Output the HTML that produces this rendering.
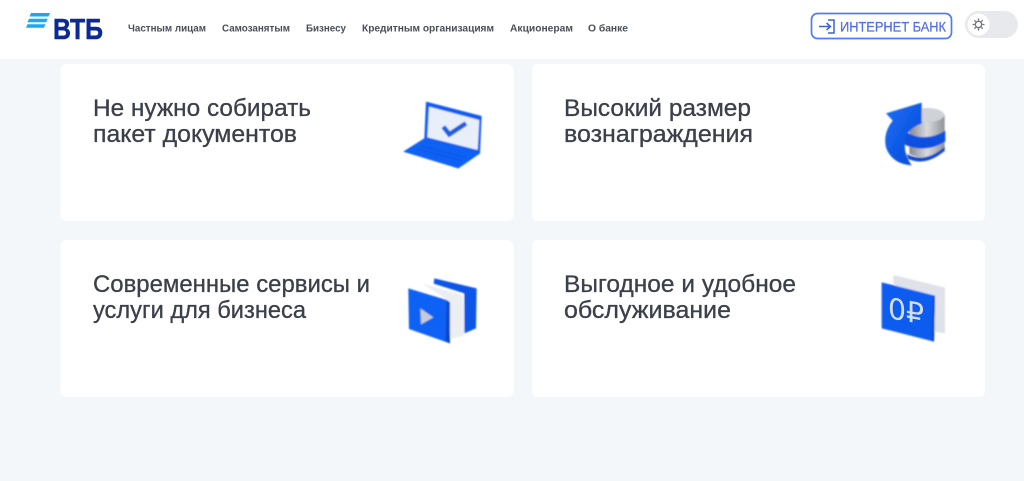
<!DOCTYPE html>
<html lang="ru">
<head>
<meta charset="utf-8">
<title>ВТБ</title>
<style>
html,body{margin:0;padding:0;width:1024px;height:481px;overflow:hidden;background:#f3f7fa}
svg{display:block;position:absolute;left:0;top:0}
text{font-family:"Liberation Sans","DejaVu Sans",sans-serif}
.n{font-size:10.5px;font-weight:700;fill:#4a4f58}
.h{font-size:24.5px;fill:#3a3f4a;stroke:#3a3f4a;stroke-width:.3px}
</style>
</head>
<body>
<svg width="1024" height="481" viewBox="0 0 1024 481" xmlns="http://www.w3.org/2000/svg">
<defs>
<linearGradient id="steel" x1="0" x2="1" y1="0" y2="0"><stop offset="0" stop-color="#84898f"/><stop offset=".5" stop-color="#d8dade"/><stop offset="1" stop-color="#8f949a"/></linearGradient>
<linearGradient id="blue" x1="0" x2="1" y1="0" y2="1"><stop offset="0" stop-color="#1670f5"/><stop offset="1" stop-color="#0b45d8"/></linearGradient>
<filter id="b" x="-10%" y="-10%" width="120%" height="120%"><feGaussianBlur stdDeviation="2"/></filter>
<filter id="t" x="-5%" y="-20%" width="110%" height="140%"><feGaussianBlur stdDeviation=".3"/></filter>
</defs>
<rect width="1024" height="481" fill="#f3f7fa"/>
<rect width="1024" height="59" fill="#fff"/>

<!-- logo -->
<g fill="#17a8f7">
<polygon points="31,13 50,13 48.5,16.5 29.5,16.5"/>
<polygon points="29,18.7 47.7,18.7 46.2,22.2 27.5,22.2"/>
<polygon points="27.5,24.2 45.5,24.2 44,27.7 26,27.7"/>
</g>
<text x="53" y="39" font-size="28.5" font-weight="700" fill="#0b2a94" stroke="#0b2a94" stroke-width=".5" textLength="50" lengthAdjust="spacingAndGlyphs">ВТБ</text>

<g filter="url(#t)">
<!-- nav -->
<text class="n" x="128" y="31.5" textLength="78" lengthAdjust="spacingAndGlyphs">Частным лицам</text>
<text class="n" x="222" y="31.5" textLength="68" lengthAdjust="spacingAndGlyphs">Самозанятым</text>
<text class="n" x="306" y="31.5" textLength="40" lengthAdjust="spacingAndGlyphs">Бизнесу</text>
<text class="n" x="362" y="31.5" textLength="132" lengthAdjust="spacingAndGlyphs">Кредитным организациям</text>
<text class="n" x="510" y="31.5" textLength="63" lengthAdjust="spacingAndGlyphs">Акционерам</text>
<text class="n" x="588" y="31.5" textLength="40" lengthAdjust="spacingAndGlyphs">О банке</text>
</g>

<!-- internet bank -->
<rect x="811.5" y="13.5" width="140" height="25" rx="6" fill="#fff" stroke="#4f7df0" stroke-width="1.7"/>
<g fill="none" stroke="#3a63d8" stroke-width="1.5">
<path d="M819 26.5H830M826.5 23L830.5 26.5L826.5 30"/>
<path d="M828 20H834V33H828"/>
</g>
<text x="840" y="31.5" font-size="14" fill="#5470e6" stroke="#5470e6" stroke-width=".25" textLength="106" lengthAdjust="spacingAndGlyphs">ИНТЕРНЕТ БАНК</text>

<!-- toggle -->
<rect x="965" y="11" width="53" height="27" rx="13.5" fill="#e7e9ec"/>
<circle cx="978.5" cy="24.5" r="11" fill="#fff"/>
<g stroke="#6d727b" stroke-width="1.3" fill="none">
<circle cx="978.5" cy="24.5" r="3.2"/>
<path d="M978.5 18.5v2M978.5 28.5v2M972.5 24.5h2M982.5 24.5h2M974.3 20.3l1.4 1.4M981.3 27.3l1.4 1.4M974.3 28.7l1.4-1.4M981.3 21.7l1.4-1.4"/>
</g>

<!-- cards -->
<rect x="60.5" y="64" width="453" height="157" rx="6" fill="#fff"/>
<rect x="532" y="64" width="453" height="157" rx="6" fill="#fff"/>
<rect x="60.5" y="240" width="453" height="157" rx="6" fill="#fff"/>
<rect x="532" y="240" width="453" height="157" rx="6" fill="#fff"/>

<!-- headings -->
<g filter="url(#t)">
<text class="h" x="93" y="116" textLength="218" lengthAdjust="spacingAndGlyphs">Не нужно собирать</text>
<text class="h" x="93" y="142" textLength="204" lengthAdjust="spacingAndGlyphs">пакет документов</text>
<text class="h" x="564" y="116" textLength="187" lengthAdjust="spacingAndGlyphs">Высокий размер</text>
<text class="h" x="564" y="142" textLength="189" lengthAdjust="spacingAndGlyphs">вознаграждения</text>
<text class="h" x="93" y="292" textLength="277" lengthAdjust="spacingAndGlyphs">Современные сервисы и</text>
<text class="h" x="93" y="318" textLength="213" lengthAdjust="spacingAndGlyphs">услуги для бизнеса</text>
<text class="h" x="564" y="292" textLength="232" lengthAdjust="spacingAndGlyphs">Выгодное и удобное</text>
<text class="h" x="564" y="318" textLength="167" lengthAdjust="spacingAndGlyphs">обслуживание</text>
</g>

<!-- laptop -->
<g transform="translate(390,90) scale(.3333)" filter="url(#b)">
<polygon points="108,35 275,78 270,190 205,235 40,185 103,145" fill="#0f5cf0"/>
<polygon points="40,185 103,145 270,190 205,235" fill="#0f62f5"/>
<path d="M85,178L215,212M95,168L225,202" stroke="#0d54e0" stroke-width="5" fill="none" stroke-dasharray="7 3"/>
<polygon points="117,50 268,90 263,180 112,142" fill="#e8eff8"/>
<path d="M160,110L178,133L228,100" stroke="#1a5fe0" stroke-width="14" fill="none"/>
</g>

<!-- coins -->
<g transform="translate(870,90) scale(.3333)" filter="url(#b)">
<path d="M118,75V192Q170,218 224,185V75Z" fill="url(#steel)"/>
<ellipse cx="170" cy="75" rx="53" ry="21" fill="#cfd2d6"/>
<path d="M104,124Q165,160 226,122V155Q165,192 104,164Z" fill="#0f4fe0"/>
<path d="M110,192Q165,222 224,170V182Q170,230 115,207Z" fill="#0c48d0"/>
<path d="M155,38L48,70L68,92Q38,130 48,172Q65,222 125,226Q98,190 106,145Q112,118 155,100Z" fill="url(#blue)"/>
</g>

<!-- play -->
<g transform="translate(395,265) scale(.3333)" filter="url(#b)">
<polygon points="118,40 245,70 243,190 208,205 208,85 116,56" fill="#0f55e8"/>
<polygon points="82,56 205,90 208,212 168,222 150,100" fill="#eceef2"/>
<polygon points="40,70 155,105 165,118 165,235 42,192" fill="#0f62f5"/>
<polygon points="155,105 165,112 165,235 152,230" fill="#0b45c8"/>
<polygon points="76,130 115,157 78,178" fill="#c5ccd8"/>
</g>

<!-- zero rouble -->
<g transform="translate(870,265) scale(.3333)" filter="url(#b)">
<polygon points="70,30 225,68 225,205 195,200 70,55" fill="#dfe2e8"/>
<polygon points="35,52 195,92 192,230 35,190" fill="#0f5cf0"/>
<polygon points="195,92 190,94 186,228 192,230" fill="#0a3fc0"/>
</g>
<text transform="translate(888,318) matrix(1,.18,0,1,0,0)" font-size="29" fill="#d5ddf0" textLength="36" lengthAdjust="spacingAndGlyphs" style="font-family:'DejaVu Sans',sans-serif">0₽</text>
</svg>
</body>
</html>
